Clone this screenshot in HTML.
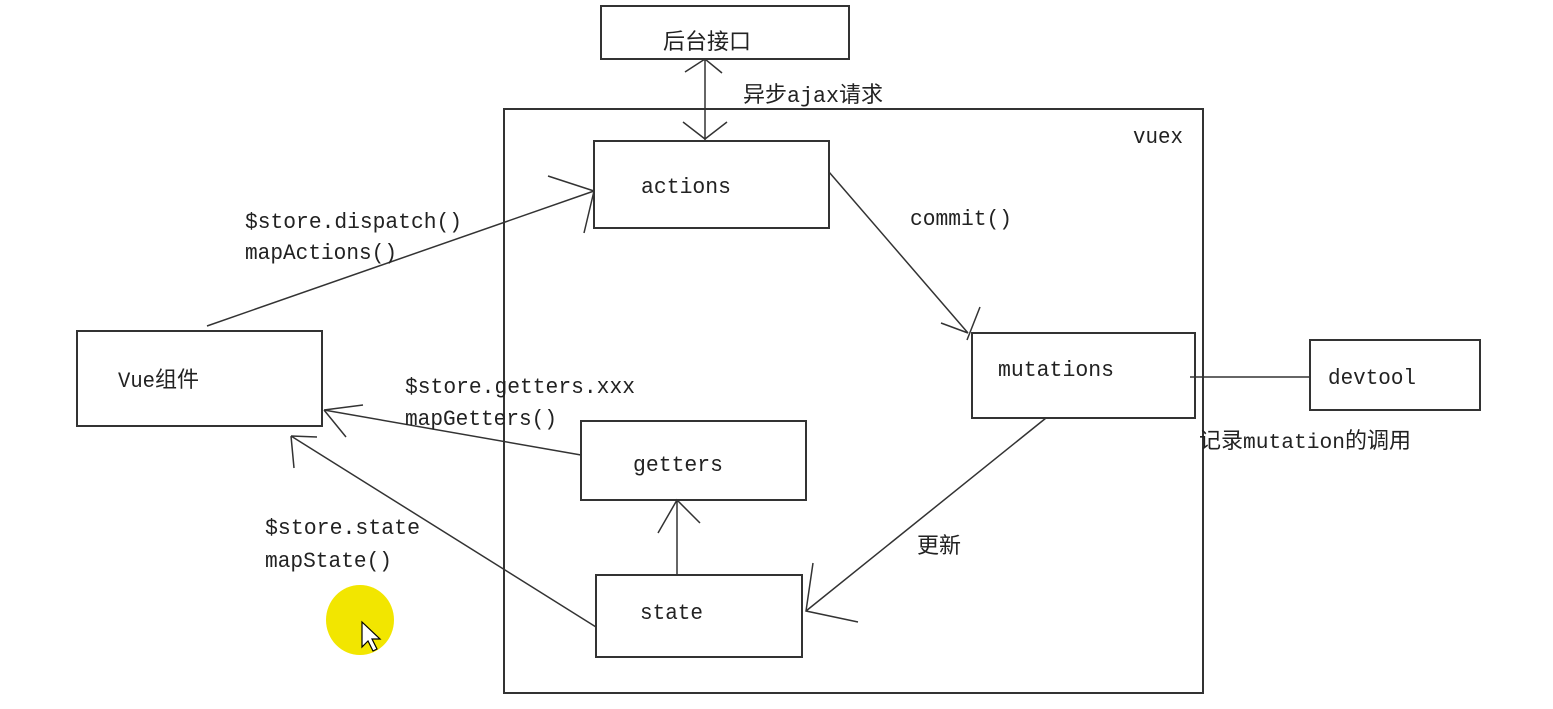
<!DOCTYPE html>
<html><head><meta charset="utf-8"><style>
html,body{margin:0;padding:0;background:#fff;}
svg{display:block}
text{font-family:"Liberation Mono","Noto Sans CJK SC",monospace;fill:#222;font-size:22px}
.c{font-family:"Liberation Sans","Noto Sans CJK SC",sans-serif;}
</style></head><body>
<svg width="1553" height="709" viewBox="0 0 1553 709" xmlns="http://www.w3.org/2000/svg">
<g fill="none" stroke="#333" stroke-width="2">
<rect x="601" y="6" width="248" height="53"/>
<rect x="504" y="109" width="699" height="584"/>
<rect x="594" y="141" width="235" height="87"/>
<rect x="972" y="333" width="223" height="85"/>
<rect x="1310" y="340" width="170" height="70"/>
<rect x="77" y="331" width="245" height="95"/>
<rect x="581" y="421" width="225" height="79"/>
<rect x="596" y="575" width="206" height="82"/>
</g>
<g fill="none" stroke="#333" stroke-width="1.5">
<path d="M705 59V140M685 72L705 59L722 73M683 122L705 139L727 122"/>
<path d="M207 326L594 191M548 176L594 191M584 233L594 191"/>
<path d="M829 172L968 333M941 323L968 333M980 307L967 340"/>
<path d="M1190 377H1310"/>
<path d="M581 455L324 410M363 405L324 410M346 437L324 410"/>
<path d="M596 627L291 436M317 437L291 436M294 468L291 436"/>
<path d="M677 575V500M658 533L677 500L700 523"/>
<path d="M1046 418L806 611M813 563L806 611L858 622"/>
</g>
<text x="663" y="49" class="c" font-size="26">后台接口</text>
<text x="743" y="102" class="c" font-size="25">异步<tspan font-family="Liberation Mono" font-size="22" textLength="52" lengthAdjust="spacingAndGlyphs">ajax</tspan>请求</text>
<text x="1133" y="143" textLength="50" lengthAdjust="spacingAndGlyphs">vuex</text>
<text x="641" y="193" textLength="90" lengthAdjust="spacingAndGlyphs">actions</text>
<text x="245" y="228" textLength="217" lengthAdjust="spacingAndGlyphs">$store.dispatch()</text>
<text x="245" y="259" textLength="152" lengthAdjust="spacingAndGlyphs">mapActions()</text>
<text x="910" y="225" textLength="102" lengthAdjust="spacingAndGlyphs">commit()</text>
<text x="998" y="376" textLength="116" lengthAdjust="spacingAndGlyphs">mutations</text>
<text x="1328" y="384" textLength="88" lengthAdjust="spacingAndGlyphs">devtool</text>
<text x="1199" y="448" class="c" font-size="24">记录<tspan font-family="Liberation Mono" font-size="21" textLength="102" lengthAdjust="spacingAndGlyphs">mutation</tspan>的调用</text>
<text x="118" y="387" class="c" font-size="26"><tspan font-family="Liberation Mono" font-size="22" textLength="37" lengthAdjust="spacingAndGlyphs">Vue</tspan>组件</text>
<text x="405" y="393" textLength="230" lengthAdjust="spacingAndGlyphs">$store.getters.xxx</text>
<text x="405" y="425" textLength="152" lengthAdjust="spacingAndGlyphs">mapGetters()</text>
<text x="633" y="471" textLength="90" lengthAdjust="spacingAndGlyphs">getters</text>
<text x="265" y="534" textLength="155" lengthAdjust="spacingAndGlyphs">$store.state</text>
<text x="265" y="567" textLength="127" lengthAdjust="spacingAndGlyphs">mapState()</text>
<text x="917" y="553" class="c" font-size="25">更新</text>
<text x="640" y="619" textLength="63" lengthAdjust="spacingAndGlyphs">state</text>
<ellipse cx="360" cy="620" rx="34" ry="35" fill="#f2e600"/>
<path d="M362 622V647L368 641L373 651L377 649L372 639L380 639Z" fill="#fff" stroke="#000" stroke-width="1.2"/>
</svg>
</body></html>
